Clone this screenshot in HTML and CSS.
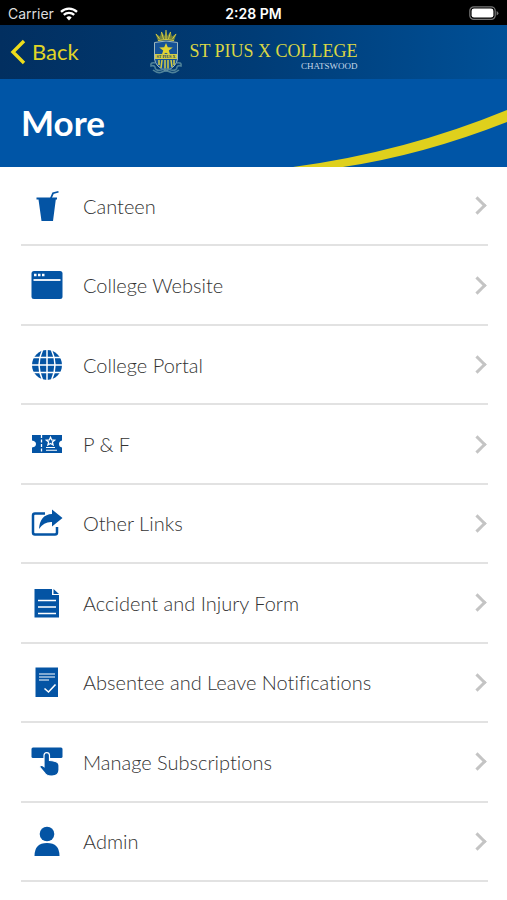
FILE: index.html
```html
<!DOCTYPE html>
<html lang="en">
<head>
    <meta charset="UTF-8">
    <meta name="viewport" content="width=device-width, initial-scale=1.0">
    <title>More</title>
    <link rel="stylesheet" href="styles.css">
</head>
<body>
    <div class="status">
        <div class="carrier">
            <span>Carrier</span>
            <svg class="wifi" viewBox="0 0 18 14">
                <path d="M9 13.6 6.3 10.6a4 4 0 0 1 5.4 0z" fill="#fff"/>
                <path d="M3.8 7.9a7.5 7.5 0 0 1 10.4 0M1 4.9a11.6 11.6 0 0 1 16 0" fill="none" stroke="#fff" stroke-width="2.3"/>
            </svg>
        </div>
        <span class="time">2:28 PM</span>
        <svg class="battery" viewBox="0 0 30 15">
            <rect x=".8" y=".8" width="25.4" height="12.6" rx="4" fill="none" stroke="#777" stroke-width="1.2"/>
            <rect x="2.6" y="2.6" width="21.8" height="9" rx="2.4" fill="#fff"/>
            <path d="M27.6 5v4.4q1.8-.8 1.8-2.2t-1.8-2.2z" fill="#777"/>
        </svg>
    </div>
    <header class="nav">
        <a class="back" href="#">
            <svg viewBox="0 0 16 26"><path d="M14 2 3 13l11 11" fill="none" stroke="#eddc1c" stroke-width="3.4"/></svg>
            <span>Back</span>
        </a>
        <div class="logo">
            <svg class="crest" viewBox="0 0 34 46">
                <!-- crown -->
                <path d="M9 12 6.500 4.500l4.500 3 1.500-5 3 4.500L17 1l1.500 6 3-4.500 1.500 5 4.500-3L25 12q-8-2-16 0z" fill="#71823f"/>
                <path d="M9 11.500q8-2 16 0M17 1v9M12.500 3l2 7M21.500 3l-2 7M7 5l3.500 5M27 5l-3.500 5" fill="none" stroke="#d3cb45" stroke-width="1"/>
                <!-- shield -->
                <path d="M5.500 13.500q11.500-3 23 0V30q-1 8-11.500 12Q6.500 38 5.500 30z" fill="#155297" stroke="#9db7bd" stroke-width="1"/>
                <path d="m17 14 1.800 4.300 5 .3-4 3 1.600 4.900-4.400-2.700-4.400 2.700 1.600-4.900-4-3 5-.3z" fill="#e1d332"/>
                <rect x="6" y="25" width="22" height="5" fill="#d4cd45"/>
                <text class="motto" x="17" y="29" text-anchor="middle">ST PIUS X</text>
                <path d="M10 31v5M13 31l-1 8M16 31v10M19 31v10M22 31l1 7M25 31v5" stroke="#d4cd45" stroke-width="1.500"/>
                <!-- scroll -->
                <path d="M6 34q-5-1-4 3 3-1 4 1 0 4 6 3 5-2 10 0 6 1 6-3 1-2 4-1 1-4-4-3M4 41q5 4 9 2 4-2 8 0 4 2 9-2" fill="none" stroke="#4f8299" stroke-width="1.600"/>
            </svg>
            <div class="school">
                <span class="name">ST PIUS X COLLEGE</span>
                <span class="suburb">CHATSWOOD</span>
            </div>
        </div>
    </header>
    <div class="banner">
        <h1>More</h1>
        <svg class="swoosh" viewBox="0 0 214 57">
            <path d="M0 57Q112 42 214 0V12Q130 45 50 57z" fill="#dfd01c"/>
        </svg>
    </div>
    <nav class="list">
        <a class="row" href="#">
            <svg class="icon" viewBox="0 0 32 32">
                <path d="M5.500 7.500h20.500v2h-1.200L22 31H10.500L7.500 9.500h-2z"/>
                <path d="M19.500 9 22 3.300l5.500-1.500" fill="none" stroke="#0454a4" stroke-width="1.700"/>
            </svg>
            <span>Canteen</span>
        </a>
        <a class="row" href="#">
            <svg class="icon" viewBox="0 0 32 32">
                <rect x=".5" y="2" width="31" height="28" rx="2.500"/>
                <path d="M2.500 11h27" stroke="#fff" stroke-width="1.800"/>
                <path d="M3 6h2.500M7 6h2.500M11 6h2.500" stroke="#fff" stroke-width="2.400"/>
            </svg>
            <span>College Website</span>
        </a>
        <a class="row" href="#">
            <svg class="icon" viewBox="0 0 32 32">
                <circle cx="16" cy="16" r="15"/>
                <path d="M16 0v32M2 8.500h28M0 16h32M2 23.500h28M11.500 1Q4.500 16 11.500 31M20.500 1Q27.500 16 20.500 31" fill="none" stroke="#fff" stroke-width="1.500"/>
            </svg>
            <span>College Portal</span>
        </a>
        <a class="row" href="#">
            <svg class="icon" viewBox="0 0 32 32">
                <path d="M1 7h30v5.500q-3 .5-3 3.500t3 3.500V25H1v-5.500q4-.5 4-3.500t-4-3.500z"/>
                <path d="M10.500 7v18" stroke="#fff" stroke-width="1.300" stroke-dasharray="3 1.500"/>
                <path d="m19.500 9.300 1.200 2.600 2.900.3-2.200 1.900.7 2.900-2.600-1.500-2.600 1.500.7-2.900-2.200-1.900 2.900-.3z" fill="none" stroke="#fff" stroke-width="1.300"/>
                <path d="M15 19.500h9M15 22.300h11" stroke="#fff" stroke-width="1.100"/>
            </svg>
            <span>P &amp; F</span>
        </a>
        <a class="row" href="#">
            <svg class="icon" viewBox="0 0 32 32">
                <path d="M14 6.500H4Q2 6.500 2 8.500v17q0 2 2 2h20q2 0 2-2V20" fill="none" stroke="#0454a4" stroke-width="2.500"/>
                <path d="M21 2.500l10.500 8.500L21 19.500v-4.500q-8-.5-13 7Q9 7.500 21 7z"/>
            </svg>
            <span>Other Links</span>
        </a>
        <a class="row" href="#">
            <svg class="icon" viewBox="0 0 32 32">
                <path d="M3.500 2h17.500v6h7v22.500H3.500z"/>
                <path d="m22.500 2 5.500 5h-5.500z"/>
                <path d="M7 13.500h18M7 20h18M7 26.500h18" stroke="#fff" stroke-width="1.700"/>
            </svg>
            <span>Accident and Injury Form</span>
        </a>
        <a class="row" href="#">
            <svg class="icon" viewBox="0 0 32 32">
                <path d="M4.500 1.500h22.500V31H4.500z"/>
                <path d="M8 8h16M8 11h16M8 14h10" stroke="#fff" stroke-width="1.100"/>
                <path d="m13.500 22.500 4 3.500 7-7.500" fill="none" stroke="#fff" stroke-width="1.600"/>
            </svg>
            <span>Absentee and Leave Notifications</span>
        </a>
        <a class="row" href="#">
            <svg class="icon" viewBox="0 0 32 32">
                <rect x=".5" y="1.500" width="31" height="10.500" rx="1.500"/>
                <path d="M13 20.500V9.500Q13 6.700 15.700 6.700T18.500 9.500V14.500q6 .5 8 2 1.500.8 1.500 3v4.500q0 6-7 6-5 0-7-2.500L8.500 21q1.500-3 4.500-.5z" stroke="#fff" stroke-width="1.200"/>
            </svg>
            <span>Manage Subscriptions</span>
        </a>
        <a class="row" href="#">
            <svg class="icon" viewBox="0 0 32 32">
                <circle cx="16" cy="9" r="7.300"/>
                <path d="M3.500 31q0-13 12.500-13t12.500 13z"/>
            </svg>
            <span>Admin</span>
        </a>
    </nav>
</body>
</html>
```
FILE: styles.css
```css
*{
    box-sizing: border-box;
    padding: 0;
    margin: 0;
}
body{
    display: flex;
    flex-direction: column;
    min-height: 100vh;
    background: #fff;
    font-family: Lato, "Open Sans", sans-serif;
}
a{
    color: inherit;
    text-decoration: none;
}
svg{
    display: block;
    flex: none;
}
.status{
    display: grid;
    grid-template-columns: 1fr auto 1fr;
    align-items: center;
    height: 25px;
    padding: 2px 8px 0;
    background: #000;
    color: #fff;
    font: 14px/20px Inter, sans-serif;
}
.carrier{
    display: flex;
    align-items: center;
    gap: 6px;
    color: #ddd;
}
.wifi{
    width: 18px;
    height: 14px;
}
.time{
    font-weight: 600;
}
.battery{
    width: 30px;
    height: 15px;
    justify-self: end;
}
.nav{
    display: grid;
    grid-template-columns: 1fr auto 1fr;
    align-items: center;
    height: 54px;
    padding: 0 10px;
    background: linear-gradient(90deg, #022f60, #003c76 50%, #005097);
}
.back{
    display: flex;
    align-items: center;
    gap: 6px;
    color: #e0d526;
    font-size: 22px;
    line-height: 28px;
}
.back svg{
    width: 16px;
    height: 26px;
}
.logo{
    display: flex;
    align-items: center;
    gap: 6px;
}
.crest{
    width: 34px;
    height: 46px;
}
.motto{
    font: bold 4px "Liberation Serif", serif;
    fill: #173f63;
}
.school{
    display: flex;
    flex-direction: column;
    padding-top: 8px;
    font-family: "Liberation Serif", serif;
    white-space: nowrap;
}
.name{
    color: #d9d645;
    font-size: 18px;
    line-height: 20px;
}
.suburb{
    align-self: flex-end;
    color: #c5d9e8;
    font-size: 9px;
    line-height: 10px;
}
.banner{
    position: relative;
    display: flex;
    align-items: center;
    height: 88px;
    padding: 0 21px 2px;
    background: #0055a6;
    color: #fff;
}
.banner h1{
    font-size: 35px;
    line-height: 40px;
}
.swoosh{
    position: absolute;
    right: 0;
    bottom: 0;
    width: 214px;
    height: 57px;
}
.list{
    display: grid;
    flex: 1;
    grid-auto-rows: minmax(72px, 1fr);
    padding: 0 19px 18px 21px;
}
.row{
    display: flex;
    align-items: center;
    gap: 20px;
    padding-left: 10px;
    border-bottom: 2px solid #e2e2e2;
    color: #333;
    font-size: 20px;
    font-weight: 300;
    font-variant-ligatures: none;
    line-height: 24px;
}
.row::after{
    content: "";
    width: 10px;
    height: 10px;
    margin: 0 4px 0 auto;
    border: solid #c4c4c4;
    border-width: 3px 3px 0 0;
    transform: rotate(45deg);
}
.icon{
    width: 32px;
    height: 32px;
    fill: #0454a4;
}
```
